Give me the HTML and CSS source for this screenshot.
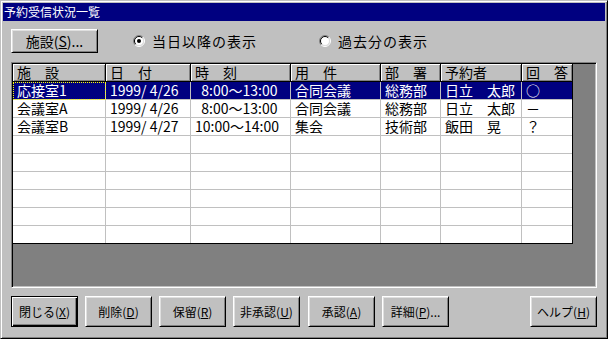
FILE: index.html
```html
<!DOCTYPE html>
<html lang="ja">
<head>
    <meta charset="UTF-8">
    <meta name="viewport" content="width=device-width, initial-scale=1.0">
    <title>予約受信状況一覧</title>
    <link rel="stylesheet" href="styles.css">
</head>
<body>
    <div class="window">
        <div class="titlebar">予約受信状況一覧</div>

        <div class="client">
            <div class="top-row">
                <button class="btn btn-facility">施設(<u>S</u>)...</button>
                <label class="radio radio-first">
                    <svg class="radio-icon" width="12" height="12" viewBox="0 0 12 12">
                        <circle cx="6" cy="6" r="4.5" fill="#fff"/>
                        <path d="M2.1 9.9 A5.5 5.5 0 0 1 9.9 2.1" fill="none" stroke="#808080"/>
                        <path d="M2.8 9.2 A4.5 4.5 0 0 1 9.2 2.8" fill="none" stroke="#000"/>
                        <path d="M9.9 2.1 A5.5 5.5 0 0 1 2.1 9.9" fill="none" stroke="#fff"/>
                        <path d="M9.2 2.8 A4.5 4.5 0 0 1 2.8 9.2" fill="none" stroke="#dfdfdf"/>
                        <circle cx="6" cy="6" r="2" fill="#000"/>
                    </svg>
                    <span>当日以降の表示</span>
                </label>
                <label class="radio">
                    <svg class="radio-icon" width="12" height="12" viewBox="0 0 12 12">
                        <circle cx="6" cy="6" r="4.5" fill="#fff"/>
                        <path d="M2.1 9.9 A5.5 5.5 0 0 1 9.9 2.1" fill="none" stroke="#808080"/>
                        <path d="M2.8 9.2 A4.5 4.5 0 0 1 9.2 2.8" fill="none" stroke="#000"/>
                        <path d="M9.9 2.1 A5.5 5.5 0 0 1 2.1 9.9" fill="none" stroke="#fff"/>
                        <path d="M9.2 2.8 A4.5 4.5 0 0 1 2.8 9.2" fill="none" stroke="#dfdfdf"/>
                    </svg>
                    <span>過去分の表示</span>
                </label>
            </div>

            <div class="grid">
                <div class="sheet">
                    <div class="row head">
                        <div class="cell">施　設</div>
                        <div class="cell">日　付</div>
                        <div class="cell">時　刻</div>
                        <div class="cell">用　件</div>
                        <div class="cell">部　署</div>
                        <div class="cell">予約者</div>
                        <div class="cell">回　答</div>
                    </div>
                    <div class="row selected">
                        <div class="cell focus">応接室1</div>
                        <div class="cell">1999/ 4/26</div>
                        <div class="cell">  8:00～13:00</div>
                        <div class="cell">合同会議</div>
                        <div class="cell">総務部</div>
                        <div class="cell">日立　太郎</div>
                        <div class="cell">○</div>
                    </div>
                    <div class="row">
                        <div class="cell">会議室A</div>
                        <div class="cell">1999/ 4/26</div>
                        <div class="cell">  8:00～13:00</div>
                        <div class="cell">合同会議</div>
                        <div class="cell">総務部</div>
                        <div class="cell">日立　太郎</div>
                        <div class="cell">－</div>
                    </div>
                    <div class="row">
                        <div class="cell">会議室B</div>
                        <div class="cell">1999/ 4/27</div>
                        <div class="cell">10:00～14:00</div>
                        <div class="cell">集会</div>
                        <div class="cell">技術部</div>
                        <div class="cell">飯田　晃</div>
                        <div class="cell">？</div>
                    </div>
                    <div class="row"><div class="cell"></div><div class="cell"></div><div class="cell"></div><div class="cell"></div><div class="cell"></div><div class="cell"></div><div class="cell"></div></div>
                    <div class="row"><div class="cell"></div><div class="cell"></div><div class="cell"></div><div class="cell"></div><div class="cell"></div><div class="cell"></div><div class="cell"></div></div>
                    <div class="row"><div class="cell"></div><div class="cell"></div><div class="cell"></div><div class="cell"></div><div class="cell"></div><div class="cell"></div><div class="cell"></div></div>
                    <div class="row"><div class="cell"></div><div class="cell"></div><div class="cell"></div><div class="cell"></div><div class="cell"></div><div class="cell"></div><div class="cell"></div></div>
                    <div class="row"><div class="cell"></div><div class="cell"></div><div class="cell"></div><div class="cell"></div><div class="cell"></div><div class="cell"></div><div class="cell"></div></div>
                    <div class="row"><div class="cell"></div><div class="cell"></div><div class="cell"></div><div class="cell"></div><div class="cell"></div><div class="cell"></div><div class="cell"></div></div>
                </div>
            </div>

            <div class="bottom-row">
                <button class="btn btn-small btn-default">閉じる(<u>X</u>)</button>
                <button class="btn btn-small">削除(<u>D</u>)</button>
                <button class="btn btn-small">保留(<u>R</u>)</button>
                <button class="btn btn-small">非承認(<u>U</u>)</button>
                <button class="btn btn-small btn-gap">承認(<u>A</u>)</button>
                <button class="btn btn-small">詳細(<u>P</u>)...</button>
                <button class="btn btn-small btn-help">ヘルプ(<u>H</u>)</button>
            </div>
        </div>
    </div>
</body>
</html>
```

FILE: styles.css
```css
/* General Styles */
body {
    margin: 0;
    font-family: "Noto Sans CJK JP", "Noto Sans", sans-serif;
    font-size: 14px;
    color: #000;
    background-color: #c0c0c0;
}

/* Dialog window */
.window {
    width: 608px;
    height: 339px;
    box-sizing: border-box;
    border: 1px solid;
    border-color: #c0c0c0 #000 #000 #c0c0c0;
    box-shadow: inset 1px 1px #fff, inset -1px -1px #808080;
    padding: 2px;
    display: flex;
    flex-direction: column;
    background-color: #c0c0c0;
}

.titlebar {
    height: 18px;
    line-height: 18px;
    flex-shrink: 0;
    background-color: #000080;
    color: #fff;
    font-size: 12px;
    padding-left: 1px;
}

.client {
    flex: 1;
    display: flex;
    flex-direction: column;
    padding: 0 8px;
}

/* Buttons */
.btn {
    box-sizing: border-box;
    background-color: #c0c0c0;
    border: 1px solid;
    border-color: #fff #000 #000 #fff;
    box-shadow: inset 1px 1px #dfdfdf, inset -1px -1px #808080;
    font-family: inherit;
    color: #000;
    padding: 0;
    line-height: 1;
}

.btn-facility {
    width: 87px;
    height: 24px;
    font-size: 14px;
}

.btn-small {
    width: 67px;
    height: 31px;
    font-size: 12px;
}

.btn-default {
    border-color: #000;
    box-shadow: inset 1px 1px #fff, inset -1px -1px #000, inset -2px -2px #808080;
}

.btn-gap {
    margin-left: 1px;
}

.btn-help {
    margin-left: auto;
}

/* Top row with radios */
.top-row {
    display: flex;
    align-items: center;
    margin-top: 8px;
    height: 24px;
}

.radio {
    display: flex;
    align-items: center;
    gap: 7px;
    letter-spacing: 1px;
}

.radio-first {
    margin-left: 35px;
    width: 186px;
}

.radio-icon {
    display: block;
}

/* List grid */
.grid {
    margin-top: 9px;
    height: 226px;
    box-sizing: border-box;
    border: 1px solid;
    border-color: #808080 #fff #fff #808080;
    box-shadow: inset 1px 1px #000, inset -1px -1px #c0c0c0;
    background-color: #808080;
    padding: 1px;
}

.sheet {
    width: 560px;
    box-sizing: border-box;
    background-color: #fff;
    border-right: 1px solid #000;
    border-bottom: 1px solid #000;
}

.row {
    display: grid;
    grid-template-columns: 93px 85px 100px 90px 60px 81px 50px;
}

.cell {
    box-sizing: border-box;
    height: 18px;
    line-height: 17px;
    padding-left: 4px;
    border-right: 1px solid #c0c0c0;
    border-bottom: 1px solid #c0c0c0;
    white-space: pre;
}

.cell:last-child {
    border-right: none;
}

.row:last-child .cell {
    border-bottom: none;
    height: 17px;
}

.head .cell {
    background-color: #c0c0c0;
    border-right: 1px solid #000;
    border-bottom: 1px solid #000;
    box-shadow: inset 1px 1px #fff, inset -1px -1px #808080;
}

.head .cell:last-child {
    border-right: none;
}

.selected .cell {
    background-color: #000080;
    color: #fff;
}

.selected .focus {
    outline: 1px dotted #ffff00;
    outline-offset: -1px;
}

/* Bottom buttons */
.bottom-row {
    display: flex;
    gap: 7px;
    margin-top: 8px;
}
```
